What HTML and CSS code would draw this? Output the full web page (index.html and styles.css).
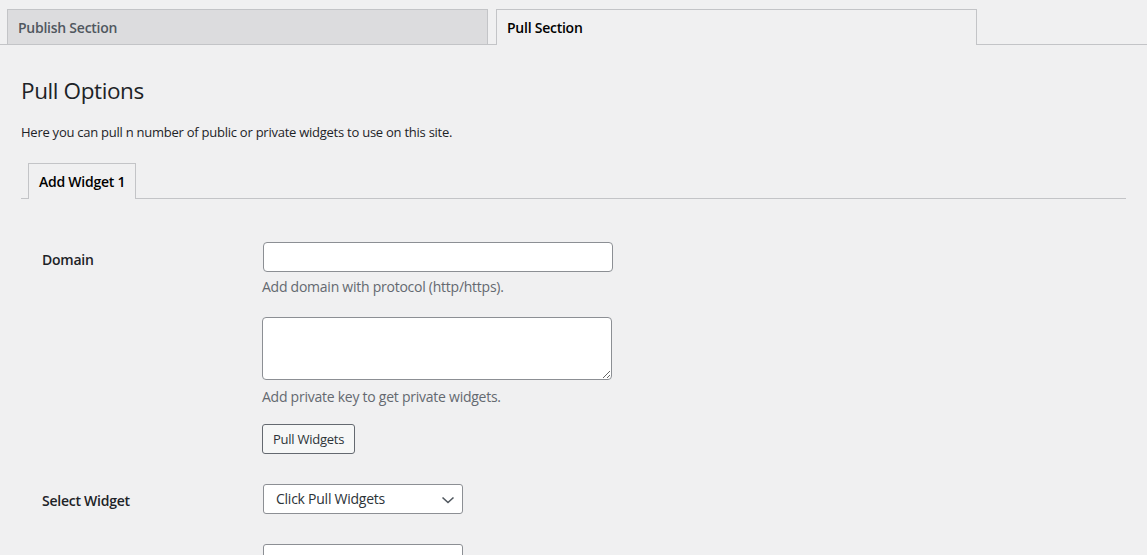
FILE: index.html
```html
<!DOCTYPE html>
<html lang="en">
<head>
<meta charset="utf-8">
<title>Pull Options</title>
<link rel="stylesheet" href="styles.css">
</head>
<body>
<nav class="nav-tabs">
  <a class="nav-tab">Publish Section</a>
  <a class="nav-tab nav-tab-active">Pull Section</a>
</nav>
<main class="wrap">
  <h2 class="title">Pull Options</h2>
  <p class="intro">Here you can pull n number of public or private widgets to use on this site.</p>
  <div class="sub-tabs">
    <a class="sub-tab">Add Widget 1</a>
  </div>
  <div class="form">
    <div class="form-row row-domain">
      <label class="field-label">Domain</label>
      <div class="field">
        <input class="text-input" type="text">
        <p class="description">Add domain with protocol (http/https).</p>
        <textarea class="textarea"></textarea>
        <p class="description desc-key">Add private key to get private widgets.</p>
        <button class="button" type="button">Pull Widgets</button>
      </div>
    </div>
    <div class="form-row row-select">
      <label class="field-label">Select Widget</label>
      <div class="field">
        <div class="select-wrap">
          <select class="select"><option>Click Pull Widgets</option></select>
          <svg class="chevron" width="14" height="8" viewBox="0 0 14 8"><path d="M1.5 1.5 L7 6.5 L12.5 1.5" fill="none" stroke="#50575e" stroke-width="1.6"/></svg>
        </div>
      </div>
    </div>
    <div class="form-row row-next">
      <div></div>
      <div class="field">
        <div class="next-box"></div>
      </div>
    </div>
  </div>
</main>
</body>
</html>
```

FILE: styles.css
```css
* { box-sizing: border-box; }
html, body { margin: 0; padding: 0; }
body {
  background: #f0f0f1;
  font-family: "Open Sans", "Noto Sans", sans-serif;
  color: #1d2327;
  width: 1147px;
  height: 555px;
  overflow: hidden;
  letter-spacing: -0.25px;
}
.nav-tabs {
  display: flex;
  align-items: flex-end;
  gap: 8px;
  padding: 9px 0 0 7px;
  border-bottom: 1px solid #c3c4c7;
  height: 45px;
}
.nav-tab {
  display: block;
  width: 481px;
  height: 35px;
  padding: 0 10px;
  border: 1px solid #c3c4c7;
  border-bottom: none;
  background: #dcdcde;
  color: #50575e;
  font-size: 14px;
  font-weight: 600;
  line-height: 35px;
}
.nav-tab-active {
  background: #f0f0f1;
  color: #000;
  height: 36px;
  margin-bottom: -1px;
}
.wrap {
  padding: 0 21px;
}
.title {
  margin: 31px 0 0;
  font-size: 22.5px;
  font-weight: 400;
  line-height: 30px;
  color: #1d2327;
  letter-spacing: -0.4px;
}
.intro {
  margin: 16px 0 0;
  font-size: 13px;
  line-height: 20px;
  color: #1d2327;
}
.sub-tabs {
  display: flex;
  align-items: flex-end;
  margin-top: 21px;
  padding-left: 7px;
  border-bottom: 1px solid #c3c4c7;
  height: 36px;
}
.sub-tab {
  display: block;
  height: 36px;
  margin-bottom: -1px;
  padding: 0 10px;
  border: 1px solid #c3c4c7;
  border-bottom: none;
  background: #f0f0f1;
  color: #000;
  font-size: 14px;
  font-weight: 600;
  line-height: 36px;
}
.form {
  padding-left: 21px;
  padding-top: 43px;
}
.form-row {
  display: grid;
  grid-template-columns: 221px 1fr;
}
.field-label {
  padding-top: 8px;
  font-size: 14px;
  font-weight: 600;
  line-height: 20px;
  color: #1d2327;
}
.field {
  display: flex;
  flex-direction: column;
  align-items: flex-start;
}
.text-input {
  width: 350px;
  height: 30px;
  margin: 0;
  border: 1px solid #8c8f94;
  border-radius: 4px;
  background: #fff;
  font: inherit;
}
.description {
  margin: 4px 0 0 -1px;
  font-size: 14px;
  line-height: 21px;
  color: #646970;
}
.textarea {
  width: 350px;
  height: 63px;
  margin: 20px 0 0 -1px;
  border: 1px solid #8c8f94;
  border-radius: 4px;
  background: #fff;
  font: inherit;
  resize: vertical;
}
.desc-key { margin-top: 6px; }
.button {
  margin: 17px 0 0 -1px;
  height: 30px;
  padding: 0 10px;
  border: 1px solid #646970;
  border-radius: 3px;
  background: #f6f7f7;
  color: #2c3338;
  font-family: inherit;
  font-size: 13px;
  line-height: 28px;
  letter-spacing: -0.25px;
}
.row-select { margin-top: 30px; }
.row-select .field-label { padding-top: 7px; }
.select-wrap {
  position: relative;
  width: 200px;
  height: 30px;
}
.select {
  appearance: none;
  -webkit-appearance: none;
  width: 200px;
  height: 30px;
  padding: 0 24px 0 12px;
  border: 1px solid #8c8f94;
  border-radius: 3px;
  background: #fff;
  color: #2c3338;
  font-family: inherit;
  font-size: 14px;
  line-height: 28px;
  letter-spacing: -0.25px;
}
.chevron {
  position: absolute;
  right: 8px;
  top: 12px;
  pointer-events: none;
}
.row-next { margin-top: 30px; }
.next-box {
  width: 200px;
  height: 30px;
  border: 1px solid #8c8f94;
  border-radius: 3px;
  background: #fff;
}
```
